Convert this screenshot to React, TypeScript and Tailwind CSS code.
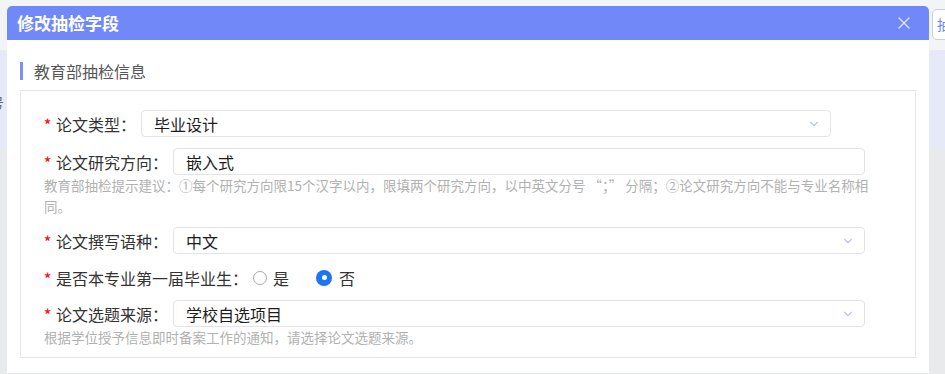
import { ChevronDown, X } from "lucide-react";

const font = { fontFamily: '"Noto Sans CJK SC", "Noto Sans", sans-serif' };

function Star() {
  return <span className="text-[14px] font-bold text-[#f01f1f] w-[9px] mr-[3px] leading-none">*</span>;
}

function Label({ text }: { text: string }) {
  return (
    <div className="flex items-center shrink-0 text-[16px] text-[#333]">
      <Star />
      <span>{text}</span>
      <span className="w-[14px] text-center">：</span>
    </div>
  );
}

function Field({ value, select, width }: { value: string; select?: boolean; width: string }) {
  return (
    <div
      className={`${width} h-[27px] border border-[#e2e4ea] rounded-[4px] flex items-center justify-between pl-[12px] pr-[9px] text-[16px] text-[#1c1c1c] bg-white`}
    >
      <span>{value}</span>
      {select && <ChevronDown className="w-[14px] h-[14px] text-[#b9c3f3]" strokeWidth={2} />}
    </div>
  );
}

function Hint({ children }: { children: React.ReactNode }) {
  return <div className="text-[13.5px] leading-[21px] text-[#b1b1b1] pr-[30px]">{children}</div>;
}

export default function App() {
  return (
    <div className="relative w-[945px] h-[374px] overflow-hidden bg-[#e8eaec]" style={font}>
      <div className="h-[50px] bg-[#f3f4f6]" />
      <div className="h-[100px] bg-[#e6e9f8] flex items-start justify-between">
        <span className="text-[14px] text-[#666] -ml-[10px] mt-[42px]">号</span>
      </div>

      {/* top-right button partially visible */}
      <div className="absolute left-[932px] top-[9px] w-[40px] h-[31px] rounded-[5px] border border-[#c5cdf6] bg-white flex items-center pl-[4px] text-[14px] text-[#6f85f0]">
        抽
      </div>

      <div className="absolute left-[7px] top-[6px] w-[922px] h-[367px] bg-white rounded-t-[5px] flex flex-col">
        <div className="h-[34px] bg-[#7088f8] rounded-t-[5px] flex items-center justify-between pl-[10px] pr-[15px]">
          <span className="text-white text-[17px] font-bold">修改抽检字段</span>
          <X className="w-[20px] h-[20px] text-[#e3e7ff]" strokeWidth={1.5} />
        </div>

        <div className="px-[13px] pt-[22px]">
          <div className="flex items-center h-[18px] border-l-[3px] border-[#7b8ff5] pl-[11px] text-[16px] text-[#555]">
            教育部抽检信息
          </div>

          <div className="mt-[10px] border border-[#e6e6e6] h-[268px] pl-[23px] pt-[19px] flex flex-col">
            <div className="flex items-center gap-[7px]">
              <Label text="论文类型" />
              <Field value="毕业设计" select width="w-[690px]" />
            </div>

            <div className="flex items-center gap-[7px] mt-[11px]">
              <Label text="论文研究方向" />
              <Field value="嵌入式" width="w-[692px]" />
            </div>
            <Hint>
              教育部抽检提示建议：①每个研究方向限15个汉字以内，限填两个研究方向，以中英文分号 “；” 分隔；②论文研究方向不能与专业名称相同。
            </Hint>

            <div className="flex items-center gap-[7px] mt-[10px]">
              <Label text="论文撰写语种" />
              <Field value="中文" select width="w-[692px]" />
            </div>

            <div className="flex items-center h-[27px] mt-[10px] text-[16px] text-[#333]">
              <Label text="是否本专业第一届毕业生" />
              <span className="ml-[7px] w-[14px] h-[14px] rounded-full border border-[#a9a9a9] bg-white" />
              <span className="ml-[6px]">是</span>
              <span className="ml-[28px] w-[14px] h-[14px] rounded-full bg-[#1d74f5] flex items-center justify-center ring-1 ring-[#1d74f5]">
                <span className="w-[5px] h-[5px] rounded-full bg-white" />
              </span>
              <span className="ml-[8px]">否</span>
            </div>

            <div className="flex items-center gap-[7px] mt-[9px]">
              <Label text="论文选题来源" />
              <Field value="学校自选项目" select width="w-[692px]" />
            </div>
            <Hint>根据学位授予信息即时备案工作的通知，请选择论文选题来源。</Hint>
          </div>
        </div>
      </div>
    </div>
  );
}
